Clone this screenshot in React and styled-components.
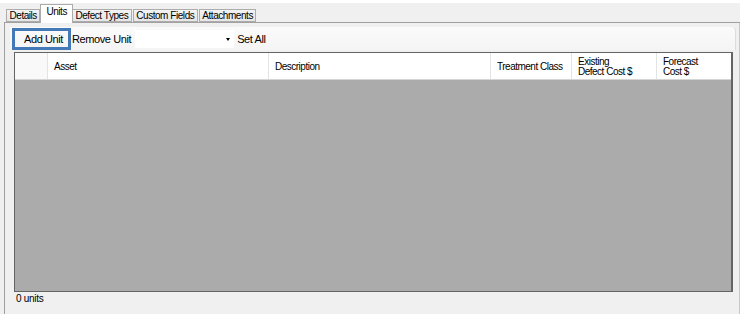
import styled, { createGlobalStyle } from 'styled-components';

const GlobalStyle = createGlobalStyle`
  body {
    margin: 0;
    background: #ffffff;
    font-family: "Liberation Sans", Arial, sans-serif;
  }
`;

const tabs = ['Details', 'Units', 'Defect Types', 'Custom Fields', 'Attachments'];

const columns = [
  { key: 'rh', label: '', width: 33 },
  { key: 'asset', label: 'Asset', width: 221 },
  { key: 'desc', label: 'Description', width: 222 },
  { key: 'treat', label: 'Treatment Class', width: 81 },
  { key: 'exist', label: 'Existing\nDefect Cost $', width: 85 },
  { key: 'fore', label: 'Forecast\nCost $' },
];

export default function App() {
  return (
    <Screen>
      <GlobalStyle />
      <Window>
        <TabStrip>
          {tabs.map((t) => (
            <Tab key={t} $active={t === 'Units'}>{t}</Tab>
          ))}
        </TabStrip>
        <Page>
          <Toolbar>
            <FocusButton>Add Unit</FocusButton>
            <ToolText>Remove Unit</ToolText>
            <Combo>
              <Arrow />
            </Combo>
            <ToolText>Set All</ToolText>
          </Toolbar>
          <Grid>
            <HeaderRow>
              {columns.map((c) => (
                <HeaderCell key={c.key} $width={c.width}>{c.label}</HeaderCell>
              ))}
            </HeaderRow>
            <GridBody />
          </Grid>
          <Status>0 units</Status>
        </Page>
      </Window>
    </Screen>
  );
}

const Screen = styled.div`
  width: 745px;
  height: 314px;
  padding: 3px 5px 0 0;
  box-sizing: border-box;
  background: #ffffff;
`;

const Window = styled.div`
  height: 100%;
  background: #f0f0f0;
  display: flex;
  flex-direction: column;
`;

const TabStrip = styled.div`
  height: 19px;
  display: flex;
  align-items: flex-end;
  padding-left: 2px;
  margin-left: 4px;
  border-bottom: 1px solid #a0a0a0;
`;

const Tab = styled.div`
  box-sizing: border-box;
  height: ${(p) => (p.$active ? '19px' : '13px')};
  margin-bottom: ${(p) => (p.$active ? '-1px' : '0')};
  padding: ${(p) => (p.$active ? '1px 5px 0' : '0 2.5px')};
  margin-left: ${(p) => (p.$active ? '-1px' : '0')};
  margin-right: ${(p) => (p.$active ? '-1px' : '1px')};
  border: 1px solid #acacac;
  border-bottom: ${(p) => (p.$active ? 'none' : '1px solid #acacac')};
  background: ${(p) => (p.$active ? '#ffffff' : 'linear-gradient(#f3f3f3, #e6e6e6)')};
  z-index: ${(p) => (p.$active ? 2 : 1)};
  position: relative;
  font-size: 10px;
  letter-spacing: -0.45px;
  line-height: 11px;
  color: #000;
  white-space: nowrap;
`;

const Page = styled.div`
  flex: 1;
  margin-left: 4px;
  border-left: 1px solid #a0a0a0;
  border-right: 1px solid #c8c8c8;
  display: flex;
  flex-direction: column;
  min-height: 0;
`;

const Toolbar = styled.div`
  height: 23px;
  margin: 4px 3px 0 5px;
  padding-left: 2px;
  display: flex;
  align-items: center;
  border-radius: 0 4px 0 0;
  background: linear-gradient(#fbfbfb, #f4f4f4);
  border-right: 1px solid #dcdcdc;
  font-size: 11px;
  letter-spacing: -0.4px;
`;

const FocusButton = styled.div`
  box-sizing: border-box;
  width: 59px;
  height: 22px;
  border: 3px solid #4479b8;
  display: flex;
  align-items: center;
  padding-left: 9px;
  color: #000;
`;

const ToolText = styled.div`
  padding: 0 2px 0 1px;
  color: #000;
  white-space: nowrap;
`;

const Combo = styled.div`
  width: 99px;
  height: 18px;
  margin: 0 2px 0 2px;
  background: #ffffff;
  position: relative;
`;

const Arrow = styled.div`
  position: absolute;
  right: 4px;
  top: 8px;
  width: 0;
  height: 0;
  border-left: 2.5px solid transparent;
  border-right: 2.5px solid transparent;
  border-top: 3px solid #000;
`;

const Grid = styled.div`
  height: 240px;
  box-sizing: border-box;
  margin: 2px 6px 0 9px;
  border: 1px solid #646464;
  border-right-width: 2px;
  background: #ababab;
  display: flex;
  flex-direction: column;
`;

const HeaderRow = styled.div`
  height: 26px;
  display: flex;
  background: #ffffff;
  border-bottom: 1px solid #d5d5d5;
`;

const HeaderCell = styled.div`
  box-sizing: border-box;
  ${(p) => (p.$width ? `width: ${p.$width}px;` : 'flex: 1;')}
  border-right: 1px solid #e3e3e3;
  padding: 2px 0 0 6px;
  display: flex;
  align-items: center;
  font-size: 10px;
  letter-spacing: -0.5px;
  line-height: 10px;
  white-space: pre;
  color: #000;
  &:first-child {
    background: #f9f9f9;
  }
  &:last-child {
    border-right: none;
  }
`;

const GridBody = styled.div`
  flex: 1;
`;

const Status = styled.div`
  height: 22px;
  display: flex;
  align-items: flex-start;
  padding: 1px 0 0 11px;
  box-sizing: border-box;
  font-size: 10px;
  letter-spacing: -0.3px;
  color: #000;
`;
